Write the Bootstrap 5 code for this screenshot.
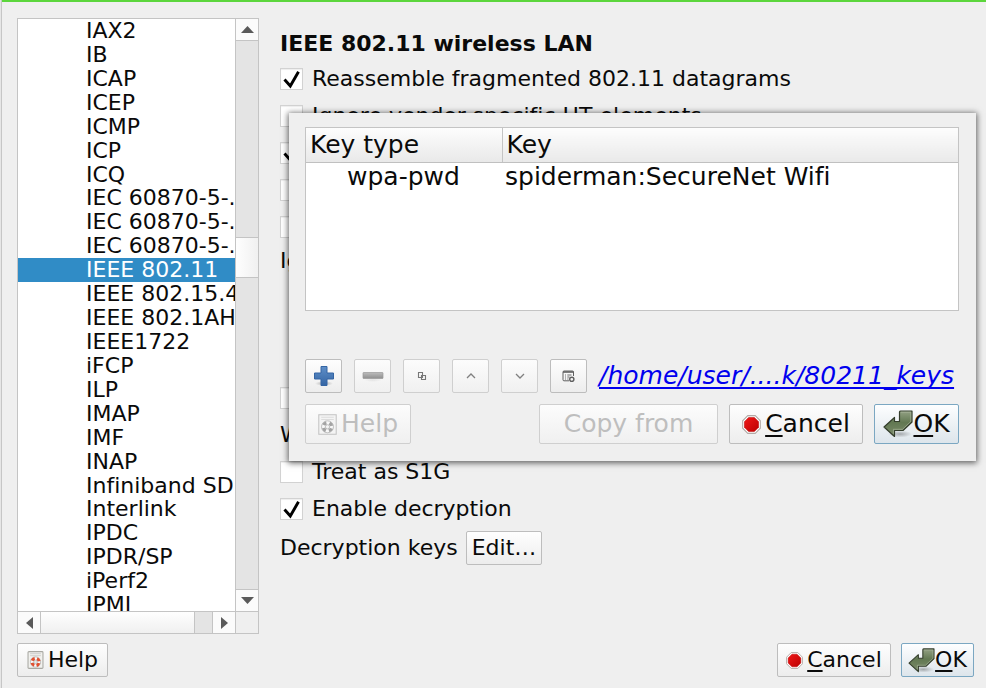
<!DOCTYPE html>
<html lang="en">
<head>
<meta charset="utf-8">
<meta name="viewport" content="width=device-width, initial-scale=1">
<title>Protocol preferences</title>
<link href="https://cdn.jsdelivr.net/npm/bootstrap@5.3.0/dist/css/bootstrap.min.css" rel="stylesheet">
<style>
  body { background: #e6e6e6; color: #0a0a0a; font: 22px/24px "DejaVu Sans", sans-serif; font-variant-ligatures: none; }
  .prefs-window { background: #efefef; border-left: 1px solid #c6c6c6; margin-left: 1px; padding-bottom: 11px; }
  .accent-line { height: 2px; background: #5cd63c; margin-bottom: 16px; }
  .prefs-main { padding-left: 15px; gap: 21px; }
  .prefs-footer { padding: 9px 12px 0 15px; gap: 10px; }

  /* protocol tree */
  .tree { width: 242px; border: 1px solid #c4c4c4; display: grid; grid-template: minmax(0, 1fr) 22px / minmax(0, 1fr) 23px; }
  .tree-items { background: #fff; overflow: hidden; height: 592px; }
  .tree-list { height: 598px; }
  .tree-list a { flex: 1 1 0; min-height: 0; padding-left: 68px; white-space: nowrap; color: inherit; text-decoration: none; }
  .tree-list a.selected { background: #308cc6; color: #fff; }
  .bar { background: #e4e4e4; }
  .bar-v { border-left: 1px solid #c4c4c4; }
  .bar-h { border-top: 1px solid #c4c4c4; }
  .bar-corner { border-left: 1px solid #c4c4c4; border-top: 1px solid #c4c4c4; }
  .bar-btn { border: 0; padding: 0; background: #fbfbfb; display: flex; align-items: center; justify-content: center; }
  .bar-v .bar-btn { height: 21px; }
  .bar-h .bar-btn { width: 22px; }
  .bar-v .thumb { height: 41px; border: solid #c4c4c4; border-width: 1px 0; background: linear-gradient(90deg, #fefefe, #f0f0f0); }
  .bar-h .thumb { border: solid #c4c4c4; border-width: 0 1px; background: linear-gradient(#fefefe, #f0f0f0); }
  .before-thumb { flex: 196 0 0; border-top: 1px solid #c4c4c4; }
  .after-thumb { flex: 312 0 0; border-bottom: 1px solid #c4c4c4; }
  .h-rest { width: 18px; border-right: 1px solid #c4c4c4; }

  /* settings form */
  .settings { padding-top: 14px; }
  .settings h1 { font-size: 22px; line-height: 24px; font-weight: 700; margin-bottom: 4px; }
  .opt { height: 37px; gap: 9px; white-space: nowrap; }
  .opt-text { height: 32px; white-space: nowrap; }
  .opt-space { height: 102px; }
  .tick { appearance: none; width: 23px; height: 22px; margin: 0; background: #fff; border: 1px solid #d2d2d2; box-shadow: inset 0 1px 1px #eee; }
  .tick:checked { background: #fff url("data:image/svg+xml,%3Csvg xmlns='http://www.w3.org/2000/svg' viewBox='0 0 21 20'%3E%3Cpath d='M3.5 10.500 9.300 17 17.500 2.800' fill='none' stroke='%23000' stroke-width='2.900'/%3E%3C/svg%3E") center / 21px 20px no-repeat; }

  /* push buttons */
  .push { border: 1px solid #bdbdbd; border-radius: 2px; background: linear-gradient(#fefefe, #ededed); color: #0a0a0a; font: inherit; height: 34px; padding: 0 5px; display: inline-flex; align-items: center; justify-content: center; white-space: nowrap; }
  .push u { text-decoration-thickness: 2px; text-underline-offset: 3px; }
  .push.main-act { border-color: #7ba7c2; background: linear-gradient(#fdfeff, #dde5eb); }
  .push:disabled { color: #bebebe; border-color: #cfcfcf; background: linear-gradient(#fcfcfc, #f0f0f0); }
  .w-help { width: 91px; }
  .w-cancel { width: 114px; }
  .w-ok { width: 73px; }

  /* key editor dialog */
  .key-dialog { left: 287px; right: 10px; top: 113px; padding: 14px 17px 17px 16px; background: #efefef; box-shadow: 0 1px 6px 1px rgba(0, 0, 0, .6); font-size: 25px; line-height: 30px; z-index: 5; }
  .key-box { background: #fff; border: 1px solid #c4c4c4; height: 184px; margin-bottom: 48px; }
  .key-grid { width: 100%; table-layout: fixed; }
  .key-grid th { height: 34px; padding: 1px 4px 0; line-height: 32px; font-weight: 400; background: linear-gradient(#fdfdfd, #e9e9e9); border-bottom: 1px solid #c0c0c0; }
  .key-grid th + th { border-left: 1px solid #c4c4c4; }
  .key-grid .type-col { width: 196px; }
  .key-grid td { padding: 0 3px; height: 28px; line-height: 28px; }
  .key-grid td:first-child { padding-left: 41px; }
  .key-tools { gap: 12px; margin-bottom: 11px; }
  .key-actions { gap: 11px; }
  .key-tools .push { width: 37px; padding: 0; }
  .key-path { font-style: italic; color: #0000ee; text-decoration-thickness: 2px; text-underline-offset: 3px; text-decoration-skip-ink: none; white-space: nowrap; }
  .key-actions .push { height: 40px; }
  .key-actions .w-help { width: 106px; }
  .w-copy { width: 179px; }
  .key-actions .w-cancel { width: 134px; }
  .key-actions .w-ok { width: 85px; }
</style>
<script src="https://cdn.jsdelivr.net/npm/bootstrap@5.3.0/dist/js/bootstrap.bundle.min.js"></script>
</head>
<body>
<svg width="0" height="0" class="position-absolute" aria-hidden="true">
  <defs>
    <linearGradient id="gOk" x1="0" y1="0" x2="0" y2="1"><stop offset="0" stop-color="#93a184"/><stop offset=".45" stop-color="#627852"/><stop offset="1" stop-color="#7c8c6b"/></linearGradient>
    <linearGradient id="gStop" x1="0" y1="0" x2="1" y2="1"><stop offset="0" stop-color="#f01818"/><stop offset="1" stop-color="#bc0000"/></linearGradient>
    <linearGradient id="gPlus" x1="0" y1="0" x2="0" y2="1"><stop offset="0" stop-color="#5f8fc8"/><stop offset="1" stop-color="#3465a4"/></linearGradient>
    <linearGradient id="gMinus" x1="0" y1="0" x2="0" y2="1"><stop offset="0" stop-color="#bcbcbc"/><stop offset="1" stop-color="#8f8f8f"/></linearGradient>
    <radialGradient id="gShade"><stop offset="0" stop-color="#000" stop-opacity=".28"/><stop offset="1" stop-color="#000" stop-opacity="0"/></radialGradient>
    <symbol id="iOk" viewBox="0 0 30 28">
      <ellipse cx="17" cy="24" rx="12" ry="3.500" fill="url(#gShade)"/>
      <path d="M16.500 1.800Q16.700 1 17.600 1H29V12L20 20.500H11.500V26.500L1 17 11.500 7.500V11.500H16.500Z" fill="url(#gOk)" stroke="#333d2b" stroke-width="1.200" stroke-linejoin="round"/>
      <path d="M17.700 2.200H27.800V11.500L19.500 19.300H10.400V23.800" fill="none" stroke="#b5c0a8" stroke-opacity=".55" stroke-width="1"/>
    </symbol>
    <symbol id="iStop" viewBox="0 0 18 18">
      <path d="M5.500.6H12.500L17.400 5.500V12.500L12.500 17.400H5.500L.6 12.500V5.500Z" fill="#fff" stroke="#b3aaa6" stroke-width="1"/>
      <path d="M6.300 2.300H11.700L15.700 6.300V11.700L11.700 15.700H6.300L2.300 11.700V6.300Z" fill="url(#gStop)" stroke="#b80000" stroke-width=".5"/>
    </symbol>
    <symbol id="iHelp" viewBox="0 0 18 20">
      <rect x=".7" y=".7" width="16.600" height="18.600" rx="1" fill="#f1f1ee" stroke="#a9a9a3" stroke-width="1.200"/>
      <path d="M3 3H15M3 5.200H15" stroke="#ccccc8" stroke-width="1"/>
      <circle cx="9" cy="12.200" r="4" fill="none" stroke="#fafafa" stroke-width="3.600"/>
      <circle cx="9" cy="12.200" r="5.700" fill="none" stroke="#999" stroke-width=".6"/>
      <circle cx="9" cy="12.200" r="4" fill="none" stroke="#e05030" stroke-width="3.400" stroke-dasharray="3.600 2.683" stroke-dashoffset="-1.300"/>
      <circle cx="9" cy="12.200" r="2" fill="#e8e8e8" stroke="#999" stroke-width=".6"/>
    </symbol>
    <symbol id="iHelpOff" viewBox="0 0 18 20">
      <rect x=".7" y=".7" width="16.600" height="18.600" fill="#f4f4f4" stroke="#c4c4c4" stroke-width="1"/>
      <path d="M3 3H15M3 5.200H15" stroke="#dcdcdc" stroke-width="1"/>
      <circle cx="9" cy="12.200" r="5.700" fill="#f8f8f8" stroke="#b4b4b4" stroke-width=".8"/>
      <circle cx="9" cy="12.200" r="4" fill="none" stroke="#a4a4a4" stroke-width="3.200" stroke-dasharray="3.200 3.083" stroke-dashoffset="-1.500"/>
      <circle cx="9" cy="12.200" r="2" fill="#f4f4f4" stroke="#b4b4b4" stroke-width=".8"/>
    </symbol>
  </defs>
</svg>

<div class="prefs-window position-relative d-flex flex-column min-vh-100">
  <div class="accent-line"></div>
  <main class="prefs-main d-flex flex-grow-1">
    <div class="tree flex-shrink-0">
      <nav class="tree-items" aria-label="Protocols">
        <div class="tree-list d-flex flex-column">
        <a href="#">IAX2</a><a href="#">IB</a><a href="#">ICAP</a><a href="#">ICEP</a><a href="#">ICMP</a>
        <a href="#">ICP</a><a href="#">ICQ</a><a href="#">IEC 60870-5-.</a><a href="#">IEC 60870-5-.</a><a href="#">IEC 60870-5-.</a>
        <a href="#" class="selected" aria-current="true">IEEE 802.11</a><a href="#">IEEE 802.15.4</a><a href="#">IEEE 802.1AH</a><a href="#">IEEE1722</a><a href="#">iFCP</a>
        <a href="#">ILP</a><a href="#">IMAP</a><a href="#">IMF</a><a href="#">INAP</a><a href="#">Infiniband SDP</a>
        <a href="#">Interlink</a><a href="#">IPDC</a><a href="#">IPDR/SP</a><a href="#">iPerf2</a><a href="#">IPMI</a>
        </div>
      </nav>
      <div class="bar bar-v d-flex flex-column">
        <button type="button" class="bar-btn" aria-label="Scroll up"><svg width="13" height="7"><path d="M0 7 6.500 0 13 7Z" fill="#5a5a5a"/></svg></button>
        <div class="before-thumb"></div><div class="thumb"></div><div class="after-thumb"></div>
        <button type="button" class="bar-btn" aria-label="Scroll down"><svg width="13" height="7"><path d="M0 0 6.500 7 13 0Z" fill="#5a5a5a"/></svg></button>
      </div>
      <div class="bar bar-h d-flex">
        <button type="button" class="bar-btn" aria-label="Scroll left"><svg width="7" height="12"><path d="M7 0 0 6 7 12Z" fill="#5a5a5a"/></svg></button>
        <div class="thumb flex-grow-1"></div><div class="h-rest"></div>
        <button type="button" class="bar-btn" aria-label="Scroll right"><svg width="7" height="12"><path d="M0 0 7 6 0 12Z" fill="#5a5a5a"/></svg></button>
      </div>
      <div class="bar-corner"></div>
    </div>

    <form class="settings flex-grow-1">
      <h1>IEEE 802.11 wireless LAN</h1>
      <div class="opt d-flex align-items-center"><input class="tick" type="checkbox" id="reassemble" checked><label for="reassemble">Reassemble fragmented 802.11 datagrams</label></div>
      <div class="opt d-flex align-items-center"><input class="tick" type="checkbox" id="vendor"><label for="vendor">Ignore vendor-specific HT elements</label></div>
      <div class="opt d-flex align-items-center"><input class="tick" type="checkbox" aria-label="Retransmitted frames" checked></div>
      <div class="opt d-flex align-items-center"><input class="tick" type="checkbox" aria-label="Packets have FCS"></div>
      <div class="opt d-flex align-items-center"><input class="tick" type="checkbox" aria-label="Validate checksum"></div>
      <div class="opt-text d-flex align-items-center">Ignore</div>
      <div class="opt-space"></div>
      <div class="opt d-flex align-items-center"><input class="tick" type="checkbox" aria-label="Key MIC length"></div>
      <div class="opt d-flex align-items-center">WPA</div>
      <div class="opt d-flex align-items-center"><input class="tick" type="checkbox" id="s1g"><label for="s1g">Treat as S1G</label></div>
      <div class="opt d-flex align-items-center"><input class="tick" type="checkbox" id="decrypt" checked><label for="decrypt">Enable decryption</label></div>
      <div class="d-flex align-items-center gap-2 pt-1"><label for="editKeys">Decryption keys</label><button type="button" class="push" id="editKeys">Edit…</button></div>
    </form>
  </main>

  <footer class="prefs-footer d-flex">
    <button type="button" class="push w-help me-auto"><svg class="me-1" width="17" height="18"><use href="#iHelp"/></svg>Help</button>
    <button type="button" class="push w-cancel"><svg class="me-1" width="17" height="17"><use href="#iStop"/></svg><span><u>C</u>ancel</span></button>
    <button type="button" class="push main-act w-ok"><svg width="27" height="25"><use href="#iOk"/></svg><span><u>O</u>K</span></button>
  </footer>

  <section class="key-dialog position-absolute" role="dialog" aria-label="Decryption keys">
    <div class="key-box">
      <table class="key-grid">
        <thead><tr><th class="type-col">Key type</th><th>Key</th></tr></thead>
        <tbody><tr><td>wpa-pwd</td><td>spiderman:SecureNet Wifi</td></tr></tbody>
      </table>
    </div>
    <div class="key-tools d-flex align-items-center">
      <button type="button" class="push" aria-label="Add"><svg width="22" height="22" viewBox="0 0 22 22"><ellipse cx="11" cy="18.500" rx="9" ry="2.500" fill="url(#gShade)"/><path d="M8 1.500H14V8H20.500V14H14V20.500H8V14H1.500V8H8Z" fill="url(#gPlus)" stroke="#3465a4" stroke-linejoin="round"/></svg></button>
      <button type="button" class="push" aria-label="Remove" disabled><svg width="22" height="22" viewBox="0 0 22 22"><ellipse cx="11" cy="15" rx="9" ry="2" fill="url(#gShade)" opacity=".25"/><rect x="1" y="7.500" width="20" height="6" rx=".5" fill="url(#gMinus)" stroke="#9a9a9a" stroke-width=".7"/></svg></button>
      <button type="button" class="push" aria-label="Copy" disabled><svg width="10" height="10" viewBox="0 0 10 10" fill="none" stroke="#777" stroke-width="1.100"><path d="M1.500 1.500H5.500V6.500H1.500Z"/><path d="M4.500 4.500H8.500V8.500H4.500Z"/></svg></button>
      <button type="button" class="push" aria-label="Move up" disabled><svg width="10" height="6" viewBox="0 0 10 6"><path d="M1 5 5 1 9 5" fill="none" stroke="#808080" stroke-width="1.300"/></svg></button>
      <button type="button" class="push" aria-label="Move down" disabled><svg width="10" height="6" viewBox="0 0 10 6"><path d="M1 1 5 5 9 1" fill="none" stroke="#808080" stroke-width="1.300"/></svg></button>
      <button type="button" class="push" aria-label="Clear all"><svg width="13" height="13" viewBox="0 0 13 13" fill="none" stroke="#606060"><path d="M7 10.800H2Q1 10.800 1 9.800V2Q1 1 2 1H10.500Q11.500 1 11.500 2V6"/><path d="M1 2H11.500" stroke-width="1.600"/><path d="M3 5H4M5.300 5H9.500M3 7H4M5.300 7H7.500M3 9H4M5.300 9H6.500" stroke-width=".9"/><circle cx="9.800" cy="9.300" r="2.100" stroke-width="1.400"/></svg></button>
      <a href="#" class="key-path">/home/user/....k/80211_keys</a>
    </div>
    <div class="key-actions d-flex">
      <button type="button" class="push w-help me-auto" disabled><svg class="me-1" width="19" height="21"><use href="#iHelpOff"/></svg>Help</button>
      <button type="button" class="push w-copy" disabled>Copy from</button>
      <button type="button" class="push w-cancel"><svg class="me-1" width="19" height="19"><use href="#iStop"/></svg><span><u>C</u>ancel</span></button>
      <button type="button" class="push main-act w-ok"><svg width="30" height="28"><use href="#iOk"/></svg><span><u>O</u>K</span></button>
    </div>
  </section>
</div>
</body>
</html>
